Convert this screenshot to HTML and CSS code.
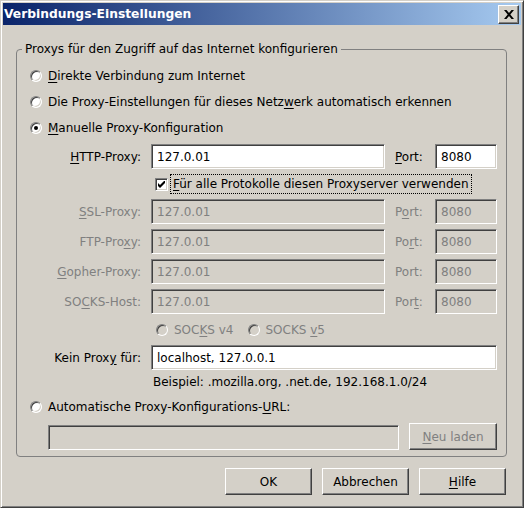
FILE: index.html
```html
<!DOCTYPE html>
<html lang="de">
<head>
<meta charset="utf-8">
<title>Verbindungs-Einstellungen</title>
<link rel="stylesheet" href="styles.css">
</head>
<body>
<div class="window">
  <div class="titlebar">
    <span class="title">Verbindungs-Einstellungen</span>
    <span class="close"><svg width="10" height="9" viewBox="0 0 10 9"><path d="M0 0h2.5l2.5 3 2.5-3H10L6.3 4.5 10 9H7.5L5 6 2.5 9H0l3.7-4.5z" fill="#000"/></svg></span>
  </div>
  <div class="body">
    <fieldset class="group">
      <legend>Proxys für den Zugriff auf das Internet konfigurieren</legend>
      <div class="opt"><span class="radio"></span><span><u>D</u>irekte Verbindung zum Internet</span></div>
      <div class="opt"><span class="radio"></span><span>Die Proxy-Einstellungen für dieses Netz<u>w</u>erk automatisch erkennen</span></div>
      <div class="opt"><span class="radio checked"></span><span><u>M</u>anuelle Proxy-Konfiguration</span></div>
      <div class="grid">
        <label class="lbl"><u>H</u>TTP-Proxy:</label>
        <div class="field">127.0.01</div>
        <label class="port"><u>P</u>ort:</label>
        <div class="field">8080</div>

        <div class="checkrow">
          <span class="check"><svg width="7" height="7" viewBox="0 0 7 7"><path d="M0 2v3l2 2 5-5V-1L2 4z" fill="#000"/></svg></span>
          <span class="focus"><u>F</u>ür alle Protokolle diesen Proxyserver verwenden</span>
        </div>

        <label class="lbl dis"><u>S</u>SL-Proxy:</label>
        <div class="field dis">127.0.01</div>
        <label class="port dis">P<u>o</u>rt:</label>
        <div class="field dis">8080</div>

        <label class="lbl dis">FTP-Pro<u>x</u>y:</label>
        <div class="field dis">127.0.01</div>
        <label class="port dis">Po<u>r</u>t:</label>
        <div class="field dis">8080</div>

        <label class="lbl dis"><u>G</u>opher-Proxy:</label>
        <div class="field dis">127.0.01</div>
        <label class="port dis">Port:</label>
        <div class="field dis">8080</div>

        <label class="lbl dis">SO<u>C</u>KS-Host:</label>
        <div class="field dis">127.0.01</div>
        <label class="port dis">Por<u>t</u>:</label>
        <div class="field dis">8080</div>

        <div class="socks">
          <span class="opt small"><span class="radio off"></span><span class="dis">SOC<u>K</u>S v4</span></span>
          <span class="opt small"><span class="radio off"></span><span class="dis">SOCKS <u>v</u>5</span></span>
        </div>

        <label class="lbl">Kein Prox<u>y</u> für:</label>
        <div class="field wide">localhost, 127.0.0.1</div>

        <div class="hint">Beispiel: .mozilla.org, .net.de, 192.168.1.0/24</div>
      </div>
      <div class="opt auto"><span class="radio"></span><span>Automatische Proxy-Konfigurations-<u>U</u>RL:</span></div>
      <div class="urlrow">
        <div class="field dis url"></div>
        <button class="btn dis small-btn"><u>N</u>eu laden</button>
      </div>
    </fieldset>
    <div class="buttons">
      <button class="btn">OK</button>
      <button class="btn">Abbrechen</button>
      <button class="btn"><u>H</u>ilfe</button>
    </div>
  </div>
</div>
</body>
</html>
```

FILE: styles.css
```css
* { box-sizing: border-box; }
html, body { margin: 0; padding: 0; }
body {
  font-family: "DejaVu Sans", sans-serif;
  font-size: 12px;
  color: #000;
  background: #d4d0c8;
}
u { text-decoration: underline; text-underline-offset: 2px; }
.window {
  width: 524px;
  height: 508px;
  background: #d4d0c8;
  border: 1px solid;
  border-color: #d4d0c8 #404040 #404040 #d4d0c8;
  box-shadow: inset 1px 1px #fff, inset -1px -1px #808080;
  padding: 2px;
  display: flex;
  flex-direction: column;
}
.titlebar {
  height: 22px;
  background: linear-gradient(to right, #0a246a, #a6caf0);
  display: flex;
  align-items: center;
  justify-content: space-between;
  padding: 0 2px 0 1px;
}
.title {
  color: #fff;
  font-weight: bold;
  font-size: 12.3px;
}
.close {
  width: 21px;
  height: 19px;
  background: #d4d0c8;
  border: 1px solid;
  border-color: #fff #404040 #404040 #fff;
  box-shadow: inset -1px -1px #808080;
  display: flex;
  align-items: center;
  justify-content: center;
  margin-top: 1px;
}
.body {
  padding: 17px 14px 0 13px;
  display: flex;
  flex-direction: column;
}
.group {
  margin: 0;
  border: 1px solid #808080;
  border-radius: 4px;
  padding: 10px 8px 6px 13px;
  display: flex;
  flex-direction: column;
  gap: 6px;
}
.group legend {
  padding: 0 3px;
  margin-left: -8px;
  line-height: 14px;
}
.opt {
  height: 20px;
  display: flex;
  align-items: center;
  gap: 6px;
}
.radio {
  width: 12px;
  height: 12px;
  border-radius: 50%;
  border: 1px solid;
  border-color: #808080 #fff #fff #808080;
  box-shadow: inset 1px 1px #404040, inset -1px -1px #d4d0c8;
  background: #fff;
  display: inline-flex;
  align-items: center;
  justify-content: center;
  flex: none;
}
.radio.checked::after {
  content: "";
  width: 4px;
  height: 4px;
  border-radius: 50%;
  background: #000;
}
.radio.off { background: #d4d0c8; }
.grid {
  display: grid;
  grid-template-columns: 111px 234px 30px 62px;
  grid-template-rows: 25px 20px 25px 25px 25px 25px 21px 25px 14px;
  column-gap: 10px;
  row-gap: 5px;
  align-items: center;
}
.lbl { text-align: right; white-space: nowrap; }
.port { white-space: nowrap; }
.dis { color: #808080; }
.field {
  height: 25px;
  background: #fff;
  border: 1px solid;
  border-color: #808080 #fff #fff #808080;
  box-shadow: inset 1px 1px #404040, inset -1px -1px #d4d0c8;
  padding: 0 5px;
  display: flex;
  align-items: center;
  white-space: nowrap;
}
.field.dis { background: #d4d0c8; }
.field.wide { grid-column: 2 / 5; }
.checkrow {
  grid-column: 2 / 5;
  display: flex;
  align-items: center;
  padding-left: 4px;
  gap: 3px;
}
.check {
  width: 13px;
  height: 13px;
  background: #fff;
  border: 1px solid;
  border-color: #808080 #fff #fff #808080;
  box-shadow: inset 1px 1px #404040, inset -1px -1px #d4d0c8;
  display: inline-flex;
  align-items: center;
  justify-content: center;
}
.focus {
  outline: 1px dotted #000;
  padding: 1px 2px;
  line-height: 16px;
}
.socks {
  grid-column: 2 / 5;
  display: flex;
  gap: 14px;
  padding-left: 5px;
}
.opt.small { height: 20px; }
.hint { grid-column: 2 / 5; padding-left: 2px; line-height: 14px; }
.auto { margin-top: 2px; }
.urlrow {
  display: flex;
  align-items: flex-end;
  gap: 10px;
  padding-left: 18px;
  height: 27px;
}
.url { width: 351px; }
.btn {
  font: inherit;
  width: 87px;
  height: 27px;
  background: #d4d0c8;
  border: 1px solid;
  border-color: #fff #404040 #404040 #fff;
  box-shadow: inset -1px -1px #808080;
  padding: 0;
  color: #000;
}
.btn.dis { color: #808080; width: 88px; }
.buttons {
  display: flex;
  justify-content: flex-end;
  gap: 10px;
  margin-top: 11px;
  padding-right: 1px;
}
```
